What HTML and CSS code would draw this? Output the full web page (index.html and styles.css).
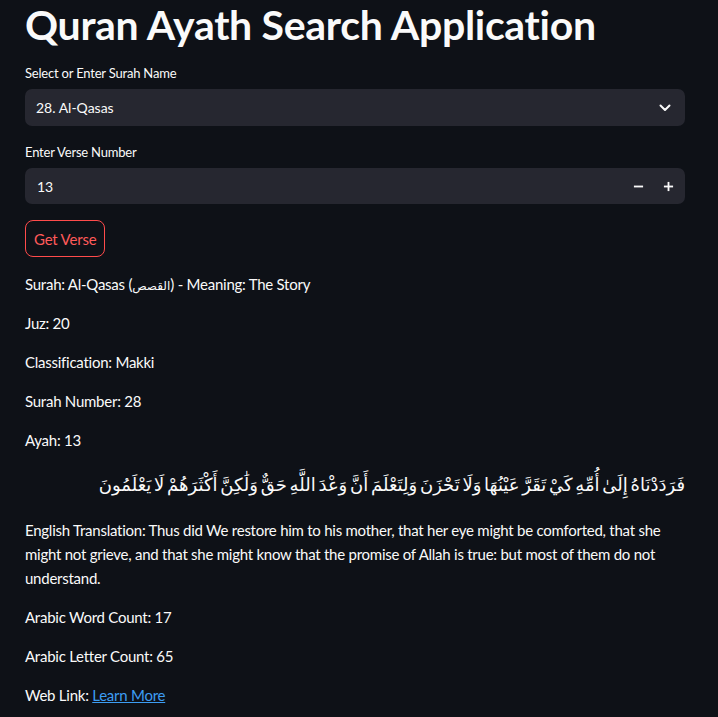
FILE: index.html
```html
<!DOCTYPE html>
<html lang="en">
<head>
<meta charset="utf-8">
<title>Quran Ayath Search Application</title>
<link rel="stylesheet" href="styles.css">
</head>
<body>
<main class="app">
  <h1 class="title">Quran Ayath Search Application</h1>

  <div class="field">
    <label class="label">Select or Enter Surah Name</label>
    <div class="select">
      <span class="value">28. Al-Qasas</span>
      <svg class="chev" width="12" height="8" viewBox="0 0 12 8"><polyline points="1.5,1.5 6,6 10.5,1.5" fill="none" stroke="#fafafa" stroke-width="2" stroke-linecap="round" stroke-linejoin="round"/></svg>
    </div>
  </div>

  <div class="field">
    <label class="label">Enter Verse Number</label>
    <div class="number">
      <span class="value">13</span>
      <div class="steps">
        <button class="step" aria-label="minus"><svg width="11" height="11" viewBox="0 0 12 12"><line x1="1" y1="6" x2="11" y2="6" stroke="#fafafa" stroke-width="2"/></svg></button>
        <button class="step" aria-label="plus"><svg width="11" height="11" viewBox="0 0 12 12"><line x1="1" y1="6" x2="11" y2="6" stroke="#fafafa" stroke-width="2"/><line x1="6" y1="1" x2="6" y2="11" stroke="#fafafa" stroke-width="2"/></svg></button>
      </div>
    </div>
  </div>

  <button class="btn">Get Verse</button>

  <p class="line">Surah: Al-Qasas (<span class="ar-inline">القصص</span>) - Meaning: The Story</p>
  <p class="line">Juz: 20</p>
  <p class="line">Classification: Makki</p>
  <p class="line">Surah Number: 28</p>
  <p class="line">Ayah: 13</p>

  <p class="arabic" dir="rtl">فَرَدَدْنَاهُ إِلَىٰ أُمِّهِ كَيْ تَقَرَّ عَيْنُهَا وَلَا تَحْزَنَ وَلِتَعْلَمَ أَنَّ وَعْدَ اللَّهِ حَقٌّ وَلَٰكِنَّ أَكْثَرَهُمْ لَا يَعْلَمُونَ</p>

  <p class="line translation">English Translation: Thus did We restore him to his mother, that her eye might be comforted, that she might not grieve, and that she might know that the promise of Allah is true: but most of them do not understand.</p>

  <p class="line">Arabic Word Count: 17</p>
  <p class="line">Arabic Letter Count: 65</p>
  <p class="line">Web Link: <a class="link" href="#">Learn More</a></p>
</main>
</body>
</html>
```

FILE: styles.css
```css
* { box-sizing: border-box; }
html, body {
  margin: 0;
  padding: 0;
  background: #0e1117;
}
body {
  color: #fafafa;
  font-family: Lato, "Noto Sans", sans-serif;
  font-size: 15px;
  overflow: hidden;
}
.app {
  width: 660px;
  margin-left: 25px;
  display: flex;
  flex-direction: column;
  align-items: flex-start;
}
.title {
  margin: 0 0 13px 0;
  font-size: 41px;
  line-height: 50px;
  font-weight: 700;
  letter-spacing: -0.3px;
}
.field {
  width: 100%;
  display: flex;
  flex-direction: column;
  margin-bottom: 16px;
}
.label {
  font-size: 13px;
  line-height: 21px;
  margin-bottom: 5px;
  letter-spacing: -0.2px;
}
.select, .number {
  width: 100%;
  background: #262730;
  border-radius: 7px;
  display: flex;
  align-items: center;
  justify-content: space-between;
}
.select {
  height: 37px;
  padding: 0 14px 0 11px;
}
.number {
  height: 36px;
  padding: 0 2px 0 12px;
}
.value { font-size: 14px; }
.chev { display: block; }
.steps { display: flex; }
.step {
  width: 30px;
  height: 32px;
  background: transparent;
  border: 0;
  padding: 0;
  display: flex;
  align-items: center;
  justify-content: center;
}
.btn {
  height: 37px;
  padding: 0 8px;
  background: transparent;
  border: 1px solid #ff4b4b;
  border-radius: 8px;
  color: #ff5a5a;
  font-family: inherit;
  font-size: 15px;
  letter-spacing: -0.2px;
  margin-bottom: 15px;
}
.line {
  margin: 0 0 15px 0;
  line-height: 24px;
  letter-spacing: -0.25px;
}
.translation { letter-spacing: -0.25px; }
.ar-inline {
  font-family: "DejaVu Sans", sans-serif;
  font-size: 12px;
  line-height: 1;
}
.arabic {
  width: 100%;
  margin: 0 0 15px 0;
  font-family: "DejaVu Sans", sans-serif;
  font-size: 18px;
  line-height: 36px;
  text-align: right;
  white-space: nowrap;
  word-spacing: -3px;
}
.link { color: #3d9df3; text-decoration: underline; }
```
